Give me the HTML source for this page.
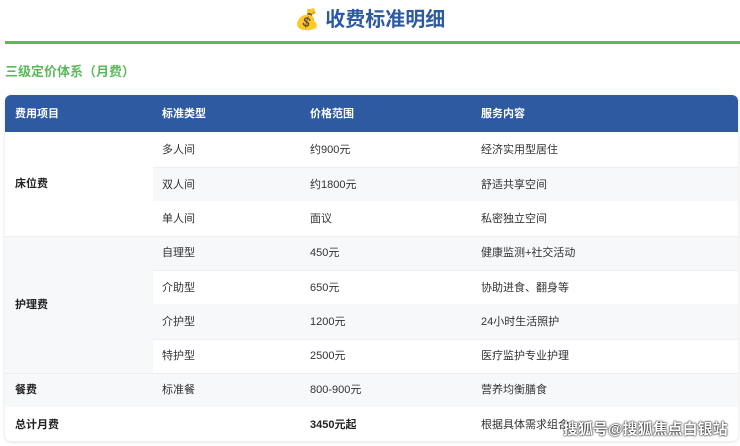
<!DOCTYPE html>
<html><head><meta charset="utf-8"><style>
*{margin:0;padding:0;box-sizing:border-box}
body{width:740px;height:446px;background:#fff;font-family:"Liberation Sans","Noto Sans CJK SC",sans-serif;position:relative;overflow:hidden;color:#333}
.title{position:absolute;top:6px;left:0;width:740px;text-align:center;font-size:20px;font-weight:bold;color:#2d5aa0;line-height:28px}
.line{position:absolute;left:5px;top:41px;width:735px;height:3px;background:#5cb85c}
.sub{position:absolute;left:5px;top:63px;font-size:13px;font-weight:bold;color:#5cb85c;line-height:18px}
.tbl{position:absolute;left:5px;top:95px;width:733px;height:346px;border-radius:6px;overflow:hidden;box-shadow:0 1px 4px rgba(0,0,0,.12);background:#fff}
.r{position:absolute;left:0;width:733px;border-top:1px solid #eceef1}
.c{position:absolute;font-size:11px;line-height:14px}
.hd{background:#2d5aa0;color:#fff;font-weight:bold;top:0;height:37px;border:none}
.g{background:#f7f8fa}
.b{font-weight:bold;color:#222}
</style></head><body>
<div class="title">💰 收费标准明细</div>
<div class="line"></div>
<div class="sub">三级定价体系（月费）</div>
<div class="tbl">
<div class="r hd"><span class="c" style="left:10px;top:12px">费用项目</span><span class="c" style="left:157px;top:12px">标准类型</span><span class="c" style="left:305px;top:12px">价格范围</span><span class="c" style="left:476px;top:12px">服务内容</span></div>
<!-- bed group -->
<div class="r" style="top:37px;height:35px;border:none"></div>
<div class="r g" style="top:72px;height:34px;left:148px;width:585px"></div>
<div class="r g" style="top:141px;height:137px"></div>
<div class="r" style="top:175px;height:34px;left:148px;width:585px;background:#fff"></div>
<div class="r" style="top:244px;height:34px;left:148px;width:585px;background:#fff"></div>
<div class="r g" style="top:278px;height:34px"></div>
<span class="c b" style="left:10px;top:82px">床位费</span>
<span class="c b" style="left:10px;top:203px">护理费</span>
<span class="c b" style="left:10px;top:288px">餐费</span>
<span class="c b" style="left:10px;top:323px">总计月费</span>
<span class="c" style="left:157px;top:48px">多人间</span><span class="c" style="left:305px;top:48px">约900元</span><span class="c" style="left:476px;top:48px">经济实用型居住</span>
<span class="c" style="left:157px;top:83px">双人间</span><span class="c" style="left:305px;top:83px">约1800元</span><span class="c" style="left:476px;top:83px">舒适共享空间</span>
<span class="c" style="left:157px;top:117px">单人间</span><span class="c" style="left:305px;top:117px">面议</span><span class="c" style="left:476px;top:117px">私密独立空间</span>
<span class="c" style="left:157px;top:151px">自理型</span><span class="c" style="left:305px;top:151px">450元</span><span class="c" style="left:476px;top:151px">健康监测+社交活动</span>
<span class="c" style="left:157px;top:186px">介助型</span><span class="c" style="left:305px;top:186px">650元</span><span class="c" style="left:476px;top:186px">协助进食、翻身等</span>
<span class="c" style="left:157px;top:220px">介护型</span><span class="c" style="left:305px;top:220px">1200元</span><span class="c" style="left:476px;top:220px">24小时生活照护</span>
<span class="c" style="left:157px;top:254px">特护型</span><span class="c" style="left:305px;top:254px">2500元</span><span class="c" style="left:476px;top:254px">医疗监护专业护理</span>
<span class="c" style="left:157px;top:288px">标准餐</span><span class="c" style="left:305px;top:288px">800-900元</span><span class="c" style="left:476px;top:288px">营养均衡膳食</span>
<span class="c b" style="left:305px;top:323px">3450元起</span><span class="c" style="left:476px;top:323px">根据具体需求组合</span>
</div>
<div style="position:absolute;left:563px;top:421px;font-size:15px;font-weight:bold;color:#fff;text-shadow:0 0 2px #000,0 0 1px #000;line-height:18px">搜狐号@搜狐焦点白银站</div>
</body></html>
